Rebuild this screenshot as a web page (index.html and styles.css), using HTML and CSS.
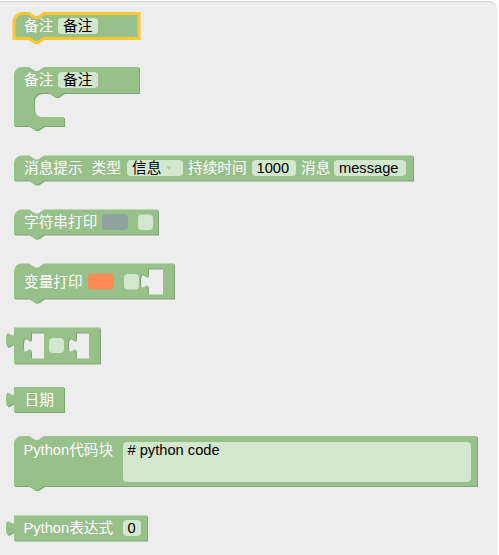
FILE: index.html
```html
<!DOCTYPE html>
<html lang="zh-CN">
<head>
<meta charset="utf-8">
<title>Blocks</title>
<link rel="stylesheet" href="styles.css">
</head>
<body>
<div class="workspace"></div>
<svg class="canvas" width="499" height="555" viewBox="0 0 499 555" xmlns="http://www.w3.org/2000/svg">
  <!-- 1: selected 备注 -->
  <g transform="translate(14,13.5)">
    <path class="blk sel" d="M 0,8 A 8,8 0 0,1 8,0 H 15 l 6,4 3,0 6,-4 H 125 V 25 H 30 l -6,4 -3,0 -6,-4 H 0 Z"/>
    <text class="lbl" x="10" y="17.5">备注</text>
    <rect class="fbg" x="44" y="4.5" width="40" height="16" rx="4"/>
    <text class="ftx" x="49" y="17.5">备注</text>
  </g>

  <!-- 2: C block 备注 -->
  <g transform="translate(14,67)">
    <path class="dark" transform="translate(1,1)" d="M 0,8 A 8,8 0 0,1 8,0 H 15 l 6,4 3,0 6,-4 H 125 V 26 H 50 l -6,4 -3,0 -6,-4 H 28 A 8,8 0 0,0 20,34 V 42 A 8,8 0 0,0 28,50 H 50 V 59 H 30 l -6,4 -3,0 -6,-4 H 0 Z"/>
    <path class="blk" d="M 0,8 A 8,8 0 0,1 8,0 H 15 l 6,4 3,0 6,-4 H 125 V 26 H 50 l -6,4 -3,0 -6,-4 H 28 A 8,8 0 0,0 20,34 V 42 A 8,8 0 0,0 28,50 H 50 V 59 H 30 l -6,4 -3,0 -6,-4 H 0 Z"/>
    <text class="lbl" x="10" y="18">备注</text>
    <rect class="fbg" x="44" y="5" width="40" height="16" rx="4"/>
    <text class="ftx" x="49" y="18">备注</text>
  </g>

  <!-- 3: 消息提示 -->
  <g transform="translate(14,155.5)">
    <path class="dark" transform="translate(1,1)" d="M 0,8 A 8,8 0 0,1 8,0 H 15 l 6,4 3,0 6,-4 H 399 V 25 H 30 l -6,4 -3,0 -6,-4 H 0 Z"/>
    <path class="blk" d="M 0,8 A 8,8 0 0,1 8,0 H 15 l 6,4 3,0 6,-4 H 399 V 25 H 30 l -6,4 -3,0 -6,-4 H 0 Z"/>
    <text class="lbl" x="10" y="17.5">消息提示</text>
    <text class="lbl" x="77.5" y="17.5">类型</text>
    <rect class="fbg" x="113" y="4.5" width="56" height="16" rx="4"/>
    <text class="ftx" x="118" y="17.5">信息</text>
    <polygon class="arrow" points="152.5,11 157.5,11 155,14"/>
    <text class="lbl" x="174" y="17.5">持续时间</text>
    <rect class="fbg" x="238" y="4.5" width="44" height="16" rx="4"/>
    <text class="ftx" x="242.5" y="17.5">1000</text>
    <text class="lbl" x="287" y="17.5">消息</text>
    <rect class="fbg" x="320" y="4.5" width="72" height="16" rx="4"/>
    <text class="ftx" x="325" y="17.5">message</text>
  </g>

  <!-- 4: 字符串打印 -->
  <g transform="translate(14,209.5)">
    <path class="dark" transform="translate(1,1)" d="M 0,8 A 8,8 0 0,1 8,0 H 15 l 6,4 3,0 6,-4 H 144 V 25 H 30 l -6,4 -3,0 -6,-4 H 0 Z"/>
    <path class="blk" d="M 0,8 A 8,8 0 0,1 8,0 H 15 l 6,4 3,0 6,-4 H 144 V 25 H 30 l -6,4 -3,0 -6,-4 H 0 Z"/>
    <text class="lbl" x="10" y="17.5">字符串打印</text>
    <rect class="grey" x="88" y="4.5" width="26" height="16" rx="4"/>
    <rect class="fbg" x="124" y="5" width="15" height="15.5" rx="4"/>
  </g>

  <!-- 5: 变量打印 -->
  <g transform="translate(14,263.5)">
    <path class="dark" transform="translate(1,1)" fill-rule="evenodd" d="M 0,8 A 8,8 0 0,1 8,0 H 15 l 6,4 3,0 6,-4 H 160 V 35 H 30 l -6,4 -3,0 -6,-4 H 0 Z M 134,5 v 5 c 0,10 -8,-8.5 -8,7.5 s 8,-2.5 8,7.5 v 6 h 15 v -26 Z"/>
    <path class="blk" fill-rule="evenodd" d="M 0,8 A 8,8 0 0,1 8,0 H 15 l 6,4 3,0 6,-4 H 160 V 35 H 30 l -6,4 -3,0 -6,-4 H 0 Z M 134,5 v 5 c 0,10 -8,-8.5 -8,7.5 s 8,-2.5 8,7.5 v 6 h 15 v -26 Z"/>
    <text class="lbl" x="10" y="23">变量打印</text>
    <rect class="orange" x="74" y="10" width="26" height="16" rx="4"/>
    <rect class="fbg" x="110" y="10.5" width="15" height="15.5" rx="4"/>
  </g>

  <!-- 6: output block with two inline holes -->
  <g transform="translate(14,327.5)">
    <path class="dark" transform="translate(1,1)" fill-rule="evenodd" d="M 0,0 H 86 V 36 H 0 V 20 c 0,-10 -8,8.5 -8,-7.5 s 8,2.5 8,-7.5 Z M 17,5 v 5 c 0,10 -8,-8.5 -8,7.5 s 8,-2.5 8,7.5 v 6 h 13 v -26 Z M 62,5 v 5 c 0,10 -8,-8.5 -8,7.5 s 8,-2.5 8,7.5 v 6 h 13 v -26 Z"/>
    <path class="blk" fill-rule="evenodd" d="M 0,0 H 86 V 36 H 0 V 20 c 0,-10 -8,8.5 -8,-7.5 s 8,2.5 8,-7.5 Z M 17,5 v 5 c 0,10 -8,-8.5 -8,7.5 s 8,-2.5 8,7.5 v 6 h 13 v -26 Z M 62,5 v 5 c 0,10 -8,-8.5 -8,7.5 s 8,-2.5 8,7.5 v 6 h 13 v -26 Z"/>
    <rect class="fbg" x="35" y="10.5" width="15" height="15" rx="4"/>
  </g>

  <!-- 7: 日期 -->
  <g transform="translate(14,387)">
    <path class="dark" transform="translate(1,1)" d="M 0,0 H 50 V 25 H 0 V 20 c 0,-10 -8,8.5 -8,-7.5 s 8,2.5 8,-7.5 Z"/>
    <path class="blk" d="M 0,0 H 50 V 25 H 0 V 20 c 0,-10 -8,8.5 -8,-7.5 s 8,2.5 8,-7.5 Z"/>
    <text class="lbl" x="10.5" y="17.5">日期</text>
  </g>

  <!-- 8: Python代码块 -->
  <g transform="translate(14,436)">
    <path class="dark" transform="translate(1,1)" d="M 0,8 A 8,8 0 0,1 8,0 H 15 l 6,4 3,0 6,-4 H 463 V 50 H 30 l -6,4 -3,0 -6,-4 H 0 Z"/>
    <path class="blk" d="M 0,8 A 8,8 0 0,1 8,0 H 15 l 6,4 3,0 6,-4 H 463 V 50 H 30 l -6,4 -3,0 -6,-4 H 0 Z"/>
    <text class="lbl" x="9.5" y="18.5">Python代码块</text>
    <rect class="fbg" x="109" y="6" width="348" height="40" rx="4"/>
    <text class="ftx" x="113.5" y="18.5"># python code</text>
  </g>

  <!-- 9: Python表达式 -->
  <g transform="translate(14,515.5)">
    <path class="dark" transform="translate(1,1)" d="M 0,0 H 133 V 25 H 0 V 20 c 0,-10 -8,8.5 -8,-7.5 s 8,2.5 8,-7.5 Z"/>
    <path class="blk" d="M 0,0 H 133 V 25 H 0 V 20 c 0,-10 -8,8.5 -8,-7.5 s 8,2.5 8,-7.5 Z"/>
    <text class="lbl" x="9.5" y="17.5">Python表达式</text>
    <rect class="fbg" x="109" y="4.5" width="18" height="16" rx="4"/>
    <text class="ftx" x="113.5" y="17.5">0</text>
  </g>
</svg>
</body>
</html>
```

FILE: styles.css
```css
html, body {
  margin: 0;
  padding: 0;
  background: #ffffff;
}
body {
  position: relative;
  width: 499px;
  height: 555px;
  overflow: hidden;
}
.workspace {
  box-sizing: border-box;
  margin-top: 1px;
  width: 497px;
  height: 554px;
  background: #ededed;
  border-top: 1px solid #d2d2d2;
  border-top-right-radius: 8px;
}
.canvas {
  position: absolute;
  top: 0;
  left: 0;
}
.blk {
  fill: #97c08b;
}
.dark {
  fill: #7ea574;
}
.sel {
  stroke: #fcc830;
  stroke-width: 3px;
}
.fbg {
  fill: #d3e6ce;
}
.grey {
  fill: #8fa29e;
}
.orange {
  fill: #fe8a55;
}
.arrow {
  fill: #a8c89e;
}
.lbl, .ftx {
  font-family: "Liberation Sans", "Noto Sans CJK SC", sans-serif;
  font-size: 14.67px;
}
.lbl {
  fill: #ffffff;
}
.ftx {
  fill: #000000;
}
```
